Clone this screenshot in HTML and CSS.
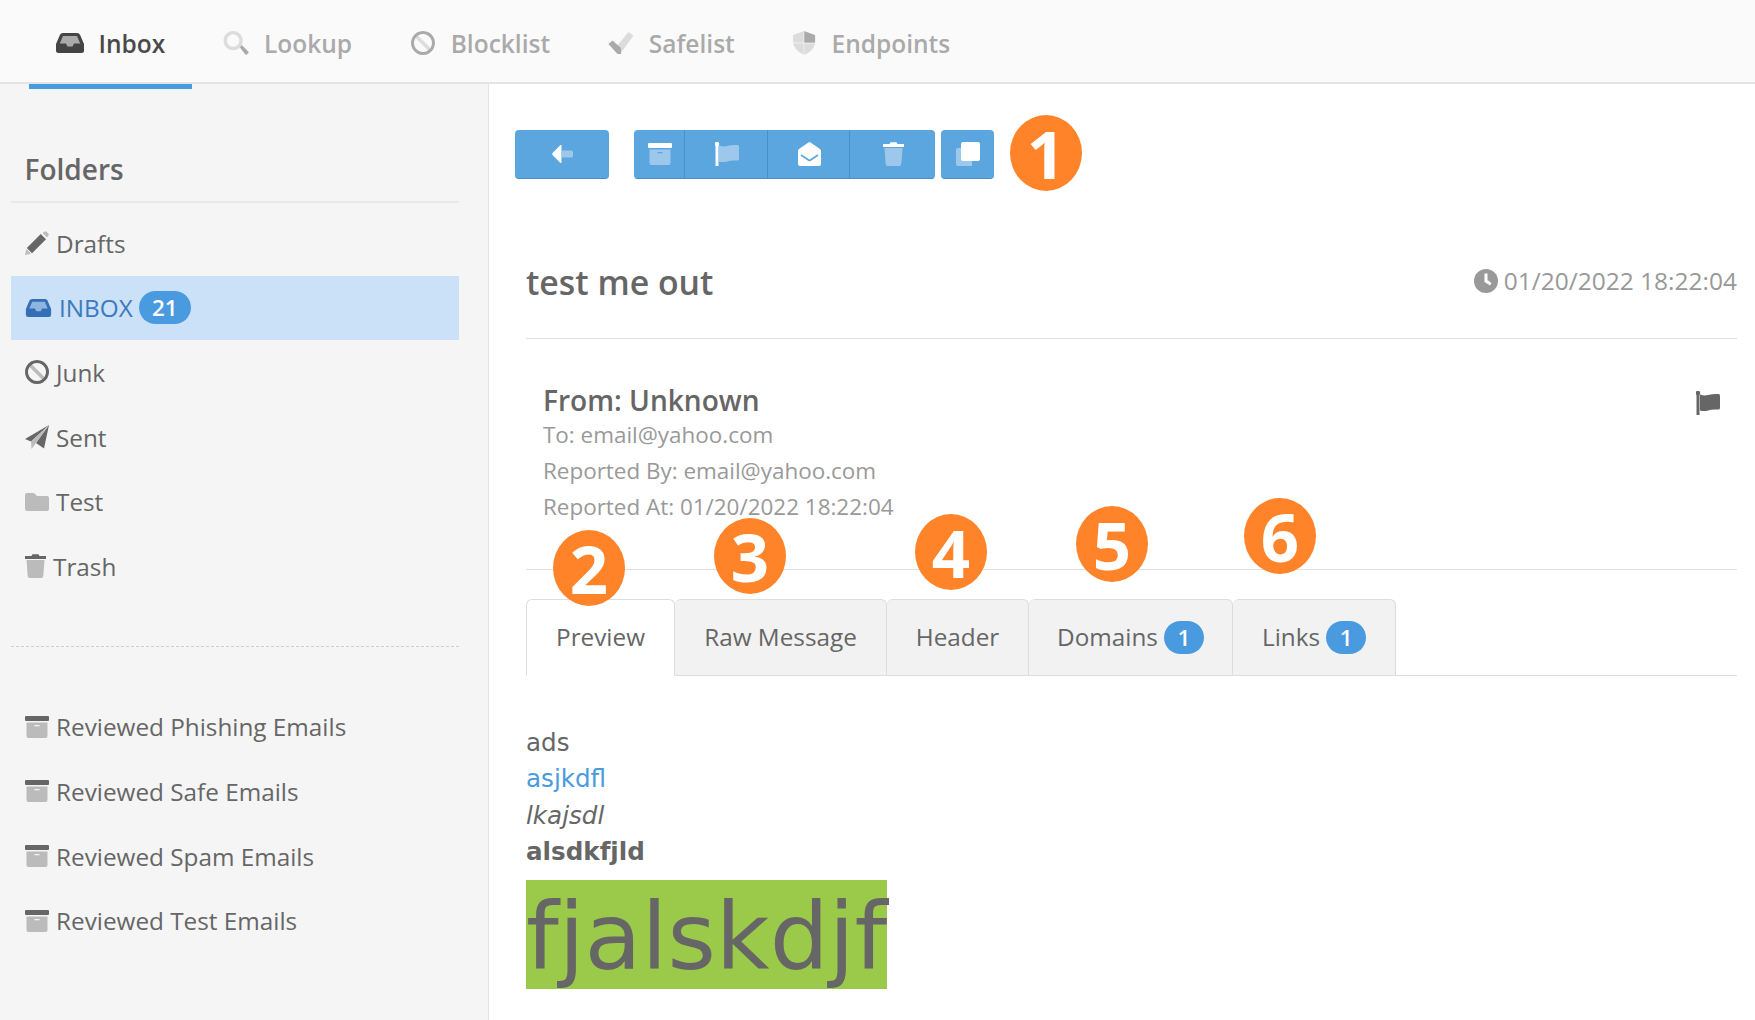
FILE: index.html
```html
<!DOCTYPE html>
<html lang="en">
<head>
<meta charset="utf-8">
<title>Inbox</title>
<link rel="stylesheet" href="styles.css">
</head>
<body>
<svg class="defs" width="0" height="0" aria-hidden="true">
  <symbol id="i-inbox" viewBox="0 0 28 20">
    <path class="p" d="M0 11 L4 1.8 Q4.8 0 6.8 0 H21.2 Q23.2 0 24 1.8 L28 11 V17.5 Q28 20 25.5 20 H2.5 Q0 20 0 17.5Z"/>
    <path class="s" d="M3.8 10.5 L7 3 H21 L24.2 10.5 H18 L16.5 13.5 H11.5 L10 10.5Z"/>
  </symbol>
  <symbol id="i-search" viewBox="0 0 26 25">
    <path class="p" d="M16.5 16.5 L19 14.5 L26 21.5 Q26.5 22.5 25 24 Q23.5 25.3 22.5 24.2Z"/>
    <path class="s" fill-rule="evenodd" d="M10 0 a10 10 0 1 0 .01 0Z M10 3.5 a6.5 6.5 0 1 1 -.01 0Z"/>
  </symbol>
  <symbol id="i-ban" viewBox="0 0 24 24">
    <path class="s" d="M4 6.5 L6.5 4 L20 17.5 L17.5 20Z"/>
    <path class="p" fill-rule="evenodd" d="M12 0 a12 12 0 1 0 .01 0Z M12 3 a9 9 0 1 1 -.01 0Z"/>
  </symbol>
  <symbol id="i-check" viewBox="0 0 25 24">
    <path class="s" d="M8.5 15 L20 1 L25 4.5 L12.5 22Z"/>
    <path class="p" d="M0 13 L4 9.5 L12.5 17 L12.5 23 L9 23Z"/>
  </symbol>
  <symbol id="i-shield" viewBox="0 0 24 24">
    <path class="s" d="M1 4 L12 0 V12 H1.2Z"/>
    <path class="s" d="M1.2 12 H12 V24 Q2 19 1.2 12Z"/>
    <path class="s" d="M12 12 H23 Q22 20 12 24Z"/>
    <path class="p" d="M12 0 L23 4 Q23.4 8 23 12 H12Z"/>
    <path class="t2" d="M11.6 0 H12.4 V24 H11.6Z M1 11.6 H23 V12.4 H1Z" opacity=".6"/>
  </symbol>
  <symbol id="i-pencil" viewBox="0 0 24 24">
    <path class="s" d="M17.5 2 L19.5.7 Q20.5 0 21.5.7 L23.5 2.7 Q24.2 3.7 23.3 4.8 L22 6.5Z"/>
    <path class="p" d="M15.8 3 L21 8.2 L7 22.2 L1.8 17Z"/>
    <path class="s" d="M1.2 18 L6 22.8 L0 24Z"/>
  </symbol>
  <symbol id="i-plane" viewBox="0 0 24 24">
    <path class="p" d="M24 0 L0 14 L6 16.5 L24 0Z M24 0 L11 18 L19 23.5 Z"/>
    <path class="s" d="M24 0 L6 16.5 L6.5 24 L11 18Z"/>
  </symbol>
  <symbol id="i-folder" viewBox="0 0 24 18">
    <path class="s" d="M0 2 Q0 0 2 0 H9 L12 3 H22 Q24 3 24 5 V16 Q24 18 22 18 H2 Q0 18 0 16Z"/>
  </symbol>
  <symbol id="i-trash" viewBox="0 0 21 24">
    <path class="p" d="M0 2 H6.5 L7.5 .3 H13.5 L14.5 2 H21 V5 H0Z"/>
    <path class="s" d="M1.5 6 H19.5 L18.3 22 Q18 24 16.3 24 H4.7 Q3 24 2.7 22Z"/>
  </symbol>
  <symbol id="i-archive" viewBox="0 0 24 22">
    <rect class="p" width="24" height="5" rx="1"/>
    <path class="s" d="M1.5 6.5 H22.5 V20 Q22.5 22 20.5 22 H3.5 Q1.5 22 1.5 20Z"/>
    <rect class="t" x="9.5" y="9" width="5" height="1.3"/>
  </symbol>
  <symbol id="i-clock" viewBox="0 0 24 24">
    <circle class="p" cx="12" cy="12" r="12"/>
    <path class="t" d="M10.5 4.5 H13.5 V11 L17.5 14 L16 16.5 L10.5 13Z"/>
  </symbol>
  <symbol id="i-flag" viewBox="0 0 24 24">
    <circle class="p" cx="2" cy="2" r="2.2"/>
    <rect class="p" x=".5" y="2" width="3" height="22"/>
    <path class="s" d="M4 3.5 Q8 5 12 4 Q18 2.5 22.5 3 Q24 3.2 24 5 V17 Q24 18.5 22 18.5 Q16 18 12 19.5 Q8 20.5 4 19.5Z"/>
  </symbol>
  <symbol id="i-back" viewBox="0 0 21 18">
    <path class="p" d="M9.5 0 V18 L8.5 18 L.5 10 Q0 9 .5 8 L8.5 0Z"/>
    <path class="s" d="M9.5 5.5 H19.5 Q21 5.5 21 7 V11 Q21 12.5 19.5 12.5 H9.5Z"/>
  </symbol>
  <symbol id="i-mail" viewBox="0 0 23 24">
    <path class="p" d="M10.5.4 Q11.5-.3 12.5.4 L22 7 Q23 7.8 23 9 V22 Q23 24 21 24 H2 Q0 24 0 22 V9 Q0 7.8 1 7 Z"/>
    <path class="b" d="M3 13 L10.5 18 Q11.5 18.7 12.5 18 L20 13"/>
  </symbol>
  <symbol id="i-copy" viewBox="0 0 24 24">
    <path class="s" d="M2 6 H16 V24 H2 Q0 24 0 22 V8 Q0 6 2 6Z"/>
    <path class="t2" d="M7 0 H22 Q24 0 24 2 V17 Q24 19 22 19 H7 Q5 19 5 17 V2 Q5 0 7 0Z"/>
  </symbol>
</svg>

<header class="topnav">
  <a class="navitem active"><svg class="ni w28"><use href="#i-inbox"/></svg><span>Inbox</span></a>
  <a class="navitem"><svg class="ni w26"><use href="#i-search"/></svg><span>Lookup</span></a>
  <a class="navitem"><svg class="ni w26"><use href="#i-ban"/></svg><span>Blocklist</span></a>
  <a class="navitem"><svg class="ni w26"><use href="#i-check"/></svg><span>Safelist</span></a>
  <a class="navitem"><svg class="ni w24"><use href="#i-shield"/></svg><span>Endpoints</span></a>
</header>

<div class="layout">
  <aside class="sidebar">
    <h2 class="side-title">Folders</h2>
    <ul class="folders">
      <li class="folder"><svg class="fi w24"><use href="#i-pencil"/></svg>Drafts</li>
      <li class="folder current"><svg class="fi w27"><use href="#i-inbox"/></svg>INBOX<span class="pill side-pill">21</span></li>
      <li class="folder"><svg class="fi w24"><use href="#i-ban"/></svg>Junk</li>
      <li class="folder"><svg class="fi w24"><use href="#i-plane"/></svg>Sent</li>
      <li class="folder"><svg class="fi w24 h18"><use href="#i-folder"/></svg>Test</li>
      <li class="folder"><svg class="fi w21"><use href="#i-trash"/></svg>Trash</li>
    </ul>
    <div class="dashed"></div>
    <ul class="folders">
      <li class="folder"><svg class="fi w24 h22"><use href="#i-archive"/></svg>Reviewed Phishing Emails</li>
      <li class="folder"><svg class="fi w24 h22"><use href="#i-archive"/></svg>Reviewed Safe Emails</li>
      <li class="folder"><svg class="fi w24 h22"><use href="#i-archive"/></svg>Reviewed Spam Emails</li>
      <li class="folder"><svg class="fi w24 h22"><use href="#i-archive"/></svg>Reviewed Test Emails</li>
    </ul>
  </aside>

  <main class="content">
    <div class="toolbar">
      <button class="btn solo back"><svg class="bi b-back"><use href="#i-back"/></svg></button>
      <div class="btn-group">
        <button class="btn g1"><svg class="bi b-arch"><use href="#i-archive"/></svg></button>
        <button class="btn g2"><svg class="bi b-flag"><use href="#i-flag"/></svg></button>
        <button class="btn g3"><svg class="bi b-mail"><use href="#i-mail"/></svg></button>
        <button class="btn g4"><svg class="bi b-trash"><use href="#i-trash"/></svg></button>
      </div>
      <button class="btn solo copy"><svg class="bi b-copy"><use href="#i-copy"/></svg></button>
    </div>

    <div class="subject-row">
      <h1 class="subject">test me out</h1>
      <div class="stamp"><svg class="clock"><use href="#i-clock"/></svg>01/20/2022 18:22:04</div>
    </div>

    <section class="meta">
      <svg class="meta-flag"><use href="#i-flag"/></svg>
      <div class="from">From: Unknown</div>
      <div class="meta-line">To: email@yahoo.com</div>
      <div class="meta-line">Reported By: email@yahoo.com</div>
      <div class="meta-line">Reported At: 01/20/2022 18:22:04</div>
    </section>

    <nav class="tabs">
      <a class="tab on t-preview">Preview</a>
      <a class="tab t-raw">Raw Message</a>
      <a class="tab t-header">Header</a>
      <a class="tab t-domains">Domains<span class="pill tab-pill">1</span></a>
      <a class="tab t-links">Links<span class="pill tab-pill">1</span></a>
    </nav>

    <article class="body">
      <div>ads</div>
      <div><a class="link">asjkdfl</a></div>
      <div><em>lkajsdl</em></div>
      <div><strong>alsdkfjld</strong></div>
      <div class="big"><span class="hl">fjalskdjf</span></div>
    </article>

    <span class="num n1">1</span>
    <span class="num n2">2</span>
    <span class="num n3">3</span>
    <span class="num n4">4</span>
    <span class="num n5">5</span>
    <span class="num n6">6</span>
  </main>
</div>
</body>
</html>
```

FILE: styles.css
```css
* { box-sizing: border-box; }
html, body { margin: 0; height: 1020px; overflow: hidden; }
body {
  font-family: "Open Sans", "Liberation Sans", sans-serif;
  font-size: 24px;
  color: #666;
  background: #fff;
}
.defs { position: absolute; }
svg { display: block; flex: none; }
.p { fill: var(--p, #666); }
.s { fill: var(--s, #bbb); }
.t { fill: var(--t, #f5f5f5); }
.t2 { fill: #fff; }
.b { fill: none; stroke: #5ca6e0; stroke-width: 1.6; }

/* top navigation */
.topnav {
  height: 84px;
  display: flex;
  gap: 4.7px;
  padding-left: 29px;
  background: #fafafa;
  border-bottom: 2px solid #e4e4e4;
  position: relative;
}
.navitem {
  display: flex;
  align-items: center;
  gap: 15px;
  height: 82px;
  padding: 4px 26.5px 0;
  color: #aaa;
  font-size: 24.5px;
  font-weight: 600;
  --p: #aaa;
  --s: #dcdcdc;
  position: relative;
}
.navitem.active { color: #4a4a4a; --p: #444; --s: #aaa; }
.navitem.active::after {
  content: "";
  position: absolute;
  left: 0; right: 0;
  top: 84px;
  height: 5px;
  background: #4a9adf;
}
.ni { height: 24px; }
.w28 { width: 28px; height: 20px; }
.w26 { width: 26px; }
.w24 { width: 24px; }

/* layout */
.layout { display: flex; height: 936px; }
.sidebar {
  width: 489px;
  flex: none;
  background: #f5f5f5;
  border-right: 1px solid #e4e4e4;
  padding: 0 29px 0 11px;
}
.side-title {
  margin: 0;
  height: 119px;
  padding: 65px 0 0 13.5px;
  font-size: 28px;
  line-height: 40px;
  font-weight: 600;
  border-bottom: 2px solid #e8e8e8;
}
.folders { list-style: none; margin: 0; padding: 0; }
.folder {
  height: 64.6px;
  display: flex;
  align-items: center;
  gap: 7px;
  padding-left: 14px;
  font-size: 24.3px;
  --p: #666;
  --s: #bbb;
}
.fi { height: 24px; }
.w27 { width: 27px; height: 18px; }
.w21 { width: 21px; }
.h18 { height: 18px; }
.h22 { height: 22px; }
.folder.current {
  background: #cae1f8;
  color: #3d79bd;
  --p: #346fb5;
  --s: #8db5e0;
  --t: #cae1f8;
}
.sidebar .folders:first-of-type { margin-top: 8px; }
.pill {
  display: inline-flex;
  align-items: center;
  justify-content: center;
  height: 33px;
  border-radius: 17px;
  background: #4a9adf;
  color: #fff;
  font-size: 22.4px;
  font-weight: 600;
}
.side-pill { width: 52px; margin-left: -1px; }
.dashed { margin-top: 47px; border-top: 1px dashed #cfcfcf; margin-bottom: 48px; }
.folders + .dashed + .folders { margin-top: 0; }

/* message */
.content {
  flex: 1;
  position: relative;
  padding: 46px 18px 0 26px;
}
.toolbar { display: flex; height: 49px; }
.btn {
  display: flex;
  align-items: center;
  justify-content: center;
  height: 49px;
  padding: 0;
  background: #5ca6e0;
  border: 0;
  border-bottom: 1px solid #4a90c8;
  --p: #fff;
  --s: #9dc8eb;
  --t: #5ca6e0;
}
.solo { border-radius: 4px; }
.back { width: 94px; }
.copy { width: 53px; margin-left: 6px; }
.btn-group {
  display: flex;
  margin-left: 25px;
  border-radius: 4px;
  overflow: hidden;
}
.g1 { width: 50px; padding-left: 1px; }
.g2 { width: 83px; border-left: 1px solid #4a90c8; padding-left: 2px; }
.g3 { width: 82px; border-left: 1px solid #4a90c8; padding-left: 2px; }
.g4 { width: 86px; border-left: 1px solid #4a90c8; padding-left: 2px; }
.b-back { width: 21px; height: 18px; }
.b-arch { width: 24px; height: 22px; }
.b-flag { width: 24px; height: 24px; }
.b-mail { width: 23px; height: 24px; }
.b-trash { width: 21px; height: 24px; }
.b-copy { width: 24px; height: 24px; }

.subject-row {
  margin: 0 0 0 11px;
  height: 160px;
  border-bottom: 1px solid #e0e0e0;
  display: flex;
  justify-content: space-between;
  align-items: flex-start;
  padding-top: 81px;
}
.subject { margin: 0; font-size: 33.8px; line-height: 44px; font-weight: 600; }
.stamp {
  display: flex;
  align-items: center;
  gap: 6px;
  color: #999;
  font-size: 24.5px;
  line-height: 44px;
  margin-top: -1px;
}
.clock { width: 24px; height: 24px; --p: #999; --t: #fff; }

.meta {
  position: relative;
  margin-left: 11px;
  padding: 41px 18px 0 17px;
  height: 231px;
  border-bottom: 1px solid #e0e0e0;
}
.meta-flag { position: absolute; right: 17px; top: 52px; width: 24px; height: 24px; --p: #666; --s: #666; }
.from { font-size: 28.1px; line-height: 40px; font-weight: 600; }
.meta-line { font-size: 22.45px; line-height: 36px; color: #999; margin-top: 0; }
.from + .meta-line { margin-top: -3px; }

.tabs {
  margin: 29px 0 0 11px;
  height: 77px;
  display: flex;
  border-bottom: 1px solid #ddd;
}
.tab {
  display: flex;
  align-items: center;
  justify-content: center;
  gap: 6px;
  height: 77px;
  padding-bottom: 2px;
  font-size: 24.3px;
  background: #f2f2f2;
  border: 1px solid #ddd;
  border-left-width: 0;
  border-radius: 6px 6px 0 0;
}
.tab.on { background: #fff; border-left-width: 1px; border-bottom-color: #fff; }
.t-preview { width: 149px; }
.t-raw { width: 212px; }
.t-header { width: 142px; }
.t-domains { width: 204px; }
.t-links { width: 163px; }
.tab-pill { width: 40px; margin-top: 2px; }

.body {
  margin: 49px 0 0 11px;
  font-family: "DejaVu Sans", Verdana, sans-serif;
  font-size: 24.6px;
  line-height: 36.3px;
}
.link { color: #4a9adf; }
.big { font-size: 93px; line-height: 115px; height: 109px; margin-top: 10px; }
.hl { background: #9bc94a; display: inline-block; vertical-align: top; width: 361px; height: 109px; white-space: nowrap; }

/* numbered callouts */
.num {
  position: absolute;
  width: 72px;
  height: 76px;
  border-radius: 50%;
  background: #ff8329;
  color: #fff;
  font-size: 67px;
  font-weight: 700;
  line-height: 76px;
  text-align: center;
}
.n1 { left: 521px; top: 31px; }
.n2 { left: 64px; top: 446px; }
.n3 { left: 225px; top: 434px; }
.n4 { left: 426px; top: 430px; }
.n5 { left: 587px; top: 422px; }
.n6 { left: 755px; top: 414px; }
```
